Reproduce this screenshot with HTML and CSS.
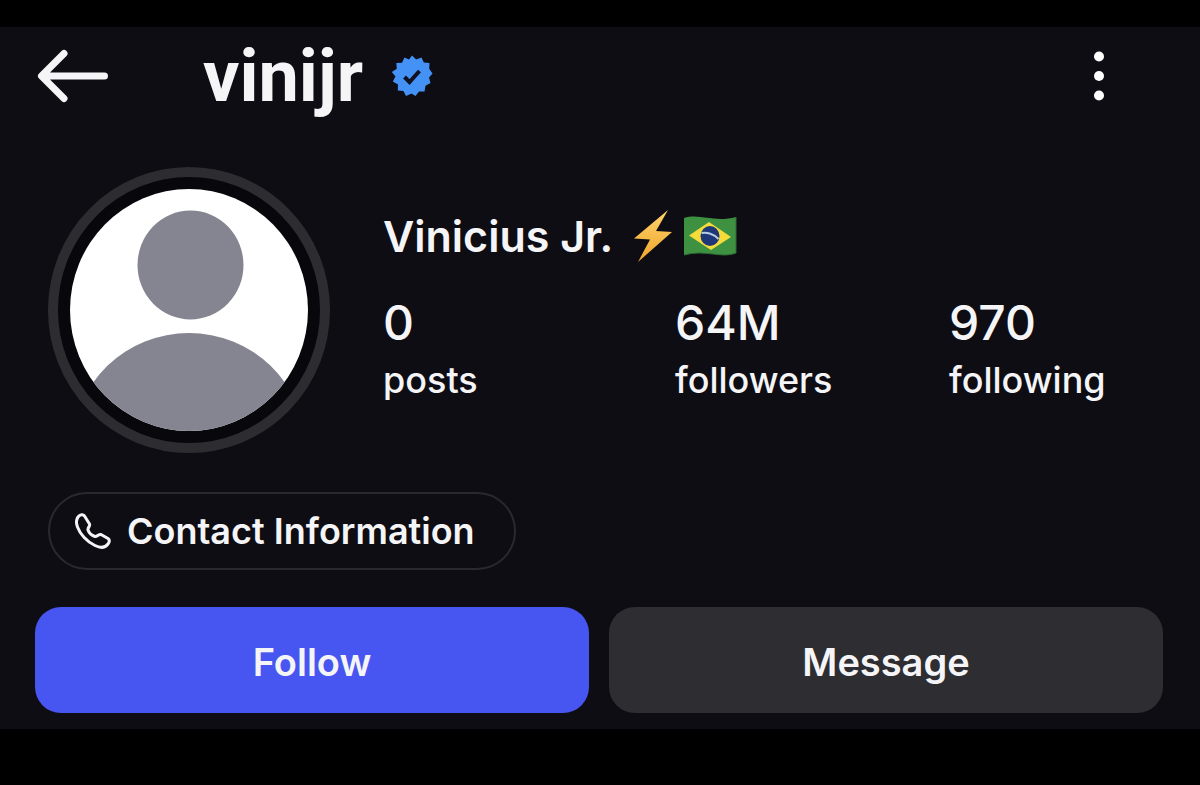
FILE: index.html
```html
<!DOCTYPE html>
<html lang="en">
<head>
<meta charset="utf-8">
<title>vinijr</title>
<meta name="viewport" content="width=device-width, initial-scale=1">
<link rel="stylesheet" href="styles.css">
</head>
<body>
<main class="screen">
  <header class="topbar">
    <button class="icon-button" type="button" aria-label="Back">
      <svg class="icon-back" viewBox="0 0 72 54" aria-hidden="true"><path d="M27 4.500 4.500 27 27 49.500M5 27H67.500"/></svg>
    </button>
    <h1 class="username">vinijr</h1>
    <svg class="icon-verified" viewBox="0 0 42 42" role="img" aria-label="Verified">
      <path class="seal" d="M21 0.500 25.200 4.500 30.500 2.500 32.800 7.500 38.500 8 38.200 13.700 41.500 18.500 38 22.500 39.500 28 34.500 30.700 33.500 36.500 28 36.500 24.500 41 20.500 38.500 15 41 12.500 36 6.800 35.500 7 29.500 1.800 26.500 4.500 21.500 0.800 17 5.800 13.700 5.300 8 11 7.700 13.500 2.500 18 4.500Z"/>
      <path class="tick" d="M13.500 22 18.500 27 28.500 16"/>
    </svg>
    <button class="icon-button menu-button" type="button" aria-label="More options">
      <svg class="icon-more" viewBox="0 0 12 50" aria-hidden="true"><circle cx="6" cy="5.500" r="5"/><circle cx="6" cy="25" r="5"/><circle cx="6" cy="44.500" r="5"/></svg>
    </button>
  </header>

  <section class="profile">
    <svg class="avatar" viewBox="0 0 282 286" role="img" aria-label="Profile photo">
      <defs><clipPath id="photo"><ellipse cx="141" cy="143" rx="119" ry="121"/></clipPath></defs>
      <ellipse class="ring" cx="141" cy="143" rx="136" ry="138"/>
      <g clip-path="url(#photo)">
        <rect class="photo-back" width="282" height="286"/>
        <ellipse class="person" cx="142.500" cy="98" rx="53" ry="54.500"/>
        <ellipse class="person" cx="141" cy="277" rx="115" ry="111"/>
      </g>
    </svg>
    <div class="details">
      <h2 class="name">Vinicius Jr.
        <svg class="emoji-bolt" viewBox="0 0 40 54" role="img" aria-label="Lightning">
          <defs><linearGradient id="gold" x2="0" y2="1"><stop offset="0" stop-color="#ffd36a"/><stop offset="1" stop-color="#efa52c"/></linearGradient></defs>
          <path fill="url(#gold)" d="M35 1 1 29.500 17 30.500 5 53 39 23 23 22Z"/>
        </svg>
        <svg class="emoji-flag" viewBox="0 0 54 40" role="img" aria-label="Brazil">
          <path fill="#3f9142" d="M1 2C17-3 31 7 53 1V37C38 43 23 33 1 39Z"/>
          <path fill="none" stroke="#2b6d34" stroke-width="1" d="M1 39C23 33 38 43 53 37V1"/>
          <path fill="#f5dc3b" d="M6 19.500 26 6 48 21 28 34Z"/>
          <ellipse fill="#1d3778" cx="27" cy="20" rx="9.500" ry="10"/>
          <path fill="none" stroke="#b9cce3" stroke-width="2" d="M18.500 17C24 16 31 18 35.500 23"/>
        </svg>
      </h2>
      <dl class="stats">
        <div class="stat"><dt>posts</dt><dd>0</dd></div>
        <div class="stat"><dt>followers</dt><dd>64M</dd></div>
        <div class="stat"><dt>following</dt><dd>970</dd></div>
      </dl>
    </div>
  </section>

  <button class="contact" type="button">
    <svg class="icon-phone" viewBox="0 0 36 36" aria-hidden="true"><path d="M3 4C5 1.500 8 1 9.500 3L14.500 11C15.500 13 12.500 14.500 13 17C14 20 17 22.500 20 23.500C22 24 23.500 21 26 21.500L33 25.500C35 27 34.500 29 33 31C30 35 25 35 20 32.500C12 29 5 21 2.500 14C1 10 1.200 6.500 3 4Z"/></svg>
    Contact Information
  </button>

  <div class="actions">
    <button class="action primary" type="button">Follow</button>
    <button class="action" type="button">Message</button>
  </div>
</main>
</body>
</html>
```
FILE: styles.css
```css
* {
  box-sizing: border-box;
}

body {
  margin: 0;
  padding: 27px 0 56px;
  background: #000;
  color: #f5f5f7;
  font-family: Inter, Roboto, "Liberation Sans", sans-serif;
  font-weight: 600;
}

h1, h2, dl, dd {
  margin: 0;
  font-weight: inherit;
}

button {
  margin: 0;
  border: 0;
  padding: 0;
  background: none;
  color: inherit;
  font: inherit;
  cursor: pointer;
}

svg {
  display: block;
  flex: none;
}

.screen {
  padding: 0 37px 16px 35px;
  background: #0e0d14;
}

.topbar {
  display: flex;
  align-items: center;
  height: 98px;
  padding: 0 58px 0 2px;
}

.icon-back {
  width: 72px;
  height: 54px;
  fill: none;
  stroke: #f5f5f7;
  stroke-width: 7;
  stroke-linecap: round;
  stroke-linejoin: round;
}

.username {
  margin-left: 94px;
  padding-top: 2px;
  font-family: Roboto, "Liberation Sans", sans-serif;
  font-size: 72px;
  line-height: 84px;
  font-weight: 700;
}

.icon-verified {
  width: 42px;
  height: 42px;
  margin-left: 28px;
}

.seal {
  fill: #4592f7;
}

.tick {
  fill: none;
  stroke: #10131f;
  stroke-width: 4;
}

.menu-button {
  margin-left: auto;
}

.icon-more {
  width: 12px;
  height: 50px;
  fill: #fff;
}

.profile {
  display: flex;
  gap: 53px;
  padding: 42px 56px 0 13px;
}

.avatar {
  width: 282px;
  height: 286px;
}

.ring {
  fill: #07070c;
  stroke: #2c2c31;
  stroke-width: 10;
}

.photo-back {
  fill: #fff;
}

.person {
  fill: #858491;
}

.details {
  flex: 1;
  padding-top: 40px;
}

.name {
  display: flex;
  align-items: center;
  height: 58px;
  font-size: 43px;
  line-height: 58px;
}

.emoji-bolt {
  width: 40px;
  height: 54px;
  margin-left: 20px;
}

.emoji-flag {
  width: 54px;
  height: 40px;
  margin-left: 10px;
}

.stats {
  display: grid;
  grid-template-columns: 292fr 274fr 158fr;
  margin-top: 28px;
  font-weight: 500;
}

.stat {
  display: flex;
  flex-direction: column-reverse;
}

.stat dt {
  font-size: 36px;
  line-height: 54px;
}

.stat dd {
  font-size: 48px;
  line-height: 60px;
}

.contact {
  display: flex;
  align-items: center;
  gap: 16px;
  height: 78px;
  margin: 39px 0 0 13px;
  padding: 0 39px 0 25px;
  border: 2px solid #29292e;
  border-radius: 39px;
  font-size: 36px;
}

.icon-phone {
  width: 36px;
  height: 36px;
  fill: none;
  stroke: #f5f5f7;
  stroke-width: 3;
  stroke-linejoin: round;
}

.actions {
  display: grid;
  grid-template-columns: 1fr 1fr;
  gap: 20px;
  margin-top: 37px;
}

.action {
  height: 106px;
  padding-top: 4px;
  border-radius: 26px;
  background: #2d2d32;
  font-size: 38px;
}

.primary {
  background: #4756f0;
}
```
